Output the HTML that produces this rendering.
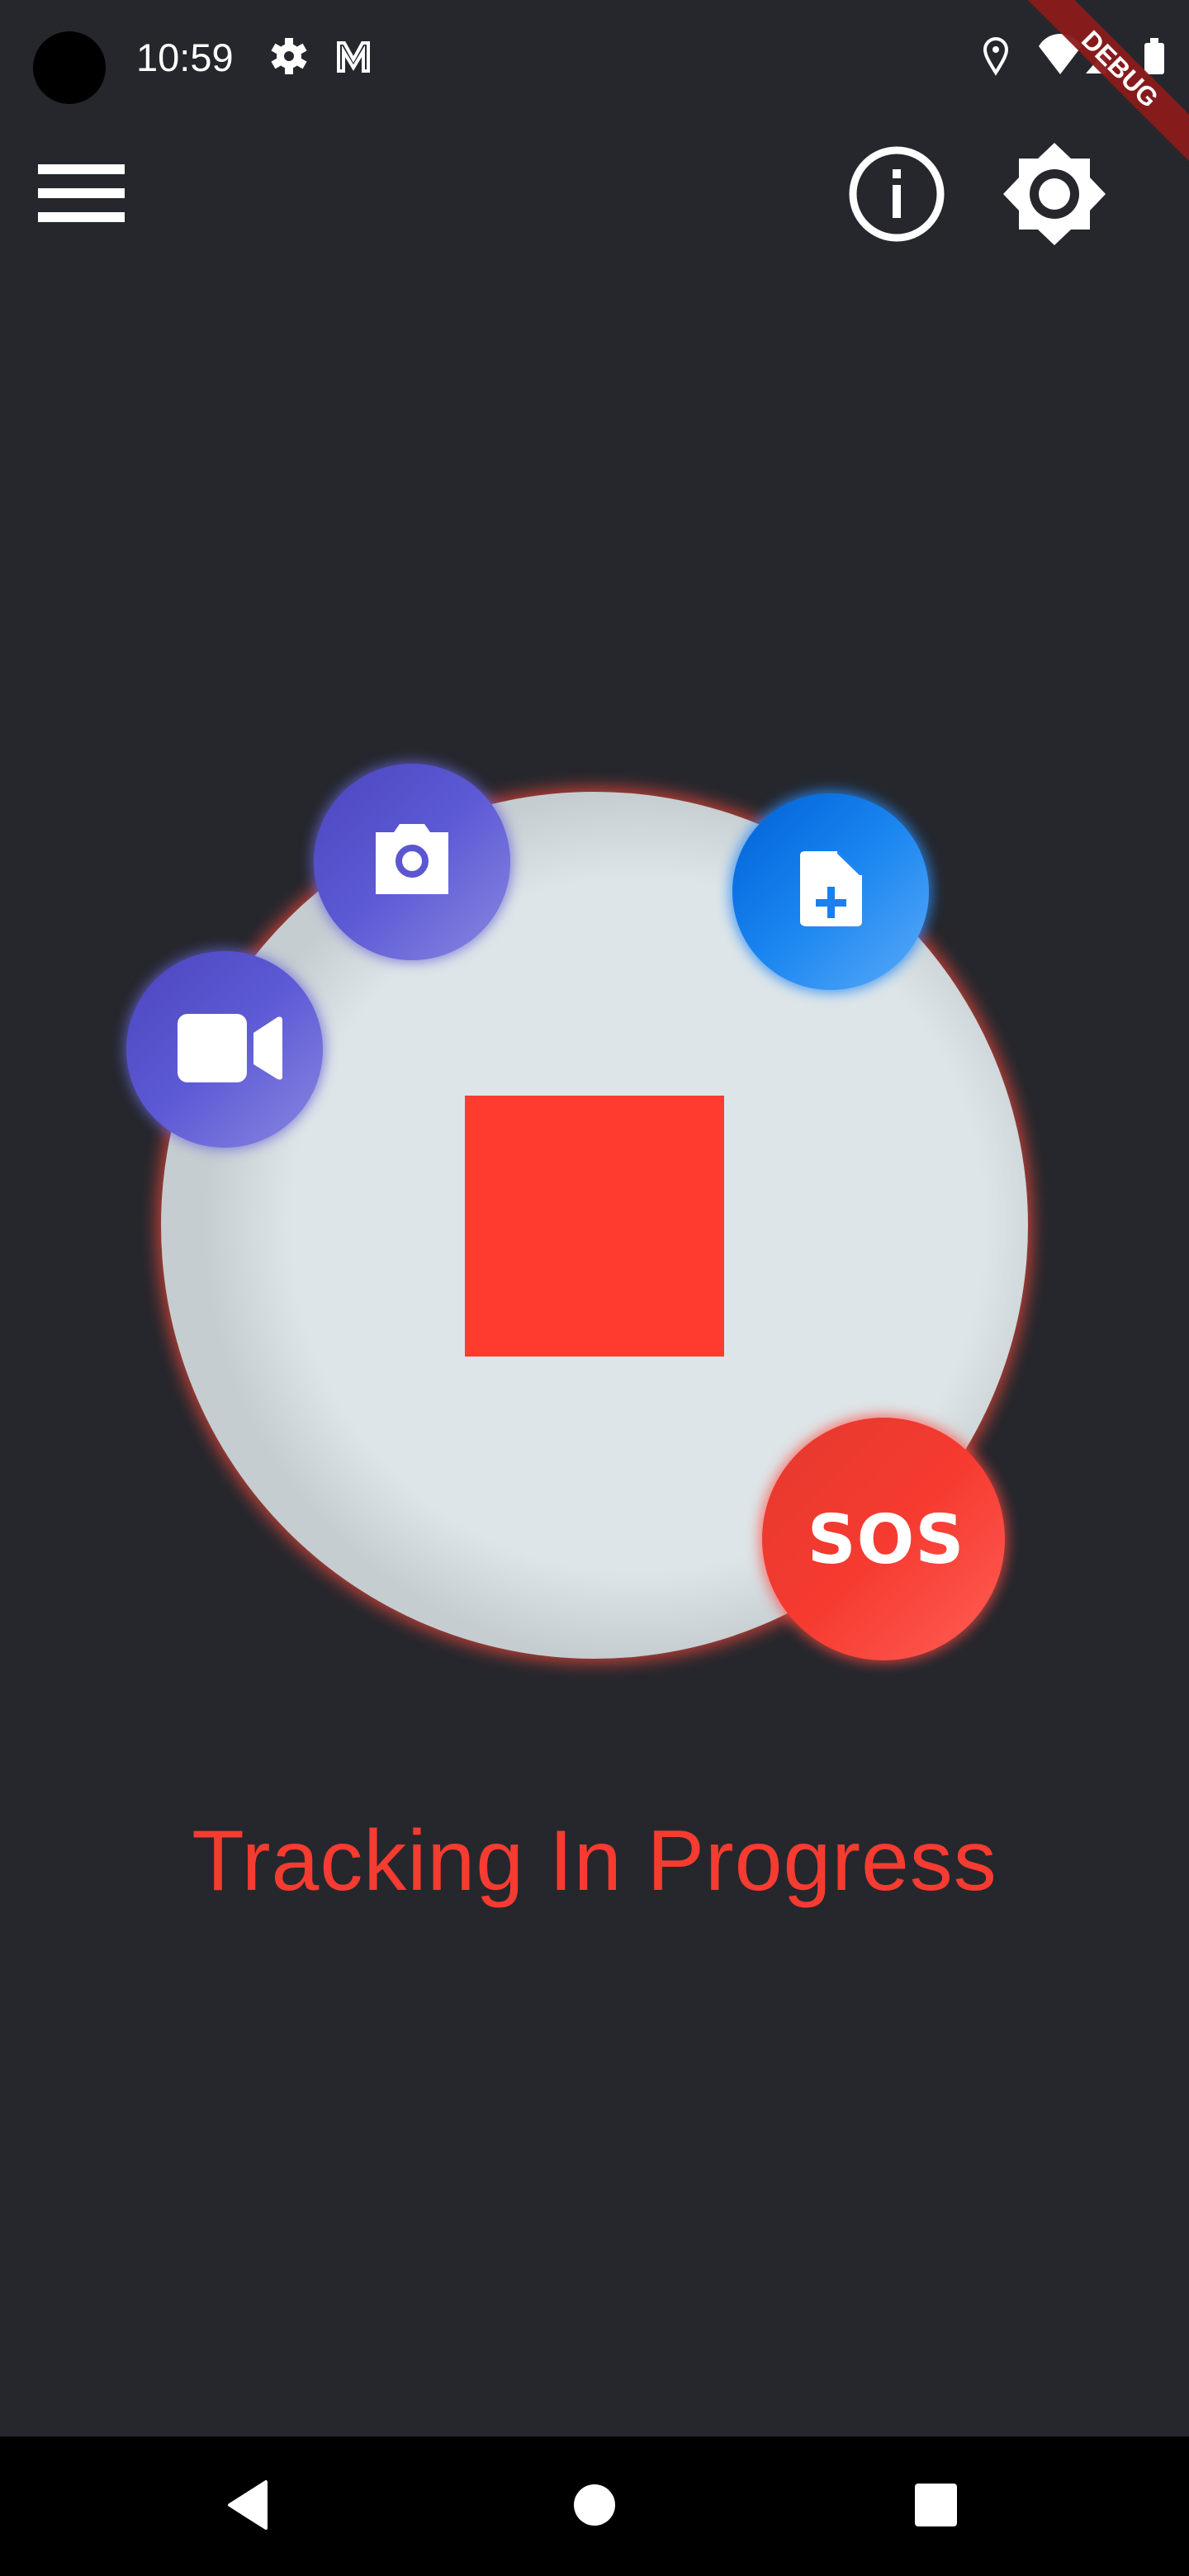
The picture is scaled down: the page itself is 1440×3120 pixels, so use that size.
<!DOCTYPE html>
<html><head><meta charset="utf-8"><style>
html,body{margin:0;padding:0;}
body{width:1440px;height:3120px;background:#25272d;position:relative;overflow:hidden;font-family:"Liberation Sans",sans-serif;}
.abs{position:absolute;}
</style></head><body>
<svg class="abs" style="left:0;top:0" width="1440" height="3120" viewBox="0 0 1440 3120">
<defs>
<filter id="glowR" x="-20%" y="-20%" width="140%" height="140%"><feGaussianBlur stdDeviation="10"/></filter>
<filter id="glowS" x="-30%" y="-30%" width="160%" height="160%"><feGaussianBlur stdDeviation="8"/></filter>
<radialGradient id="plate" cx="0.55" cy="0.5" r="0.5">
<stop offset="0.8" stop-color="#dde5e8"/><stop offset="1" stop-color="#c5cdd0"/></radialGradient>
<linearGradient id="purp" x1="0" y1="0" x2="1" y2="1"><stop offset="0" stop-color="#4b46bd"/><stop offset="0.5" stop-color="#5d5ad6"/><stop offset="1" stop-color="#8a88e0"/></linearGradient>
<linearGradient id="blue" x1="0" y1="0" x2="1" y2="1"><stop offset="0" stop-color="#0060d8"/><stop offset="0.5" stop-color="#1a86f0"/><stop offset="1" stop-color="#5aaaf8"/></linearGradient>
<linearGradient id="red" x1="0" y1="0" x2="1" y2="1"><stop offset="0" stop-color="#e33a2e"/><stop offset="0.5" stop-color="#f63a30"/><stop offset="1" stop-color="#ff5e55"/></linearGradient>
</defs>
<ellipse cx="84" cy="82" rx="44" ry="44" fill="#000"/>
<g transform="translate(350,68)" fill="#fff">
<circle r="15"/>
<g><rect x="-5" y="-22" width="10" height="44"/><rect x="-5" y="-22" width="10" height="44" transform="rotate(60)"/><rect x="-5" y="-22" width="10" height="44" transform="rotate(120)"/></g>
<circle r="6" fill="#25272d"/></g>
<path d="M410 86 V52 H417 L428 72 L439 52 H446 V86 H440 V62 L428 82 L416 62 V86 Z" fill="none" stroke="#fff" stroke-width="4"/>
<path d="M1206 88 C1196 72 1193 66 1193 60 A13 13 0 0 1 1219 60 C1219 66 1216 72 1206 88 Z" fill="none" stroke="#fff" stroke-width="4"/>
<circle cx="1206" cy="60" r="4" fill="#fff"/>
<path d="M1258 56 A30 30 0 0 1 1310 56 L1284 90 Z" fill="#fff"/>
<path d="M1315 89 L1340 60 V89 Z" fill="#fff"/>
<rect x="1386" y="52" width="24" height="38" rx="3" fill="#fff"/><rect x="1393" y="46" width="10" height="8" fill="#fff"/>
<g transform="translate(1440,0) rotate(45)">
<rect x="-200" y="98" width="400" height="40" fill="#8b1a1a" opacity="0.95"/>
<text x="0" y="129" fill="#fff" font-family="Liberation Sans" font-weight="bold" font-size="32" text-anchor="middle">DEBUG</text>
</g>
<rect x="46" y="199" width="105" height="12" fill="#fff"/>
<rect x="46" y="228" width="105" height="12" fill="#fff"/>
<rect x="46" y="257" width="105" height="12" fill="#fff"/>
<circle cx="1086" cy="235" r="53" fill="none" stroke="#fff" stroke-width="9"/>
<rect x="1081" y="205" width="10" height="11" fill="#fff"/>
<rect x="1081" y="224" width="10" height="40" fill="#fff"/>
<g transform="translate(1277,235)" fill="#fff">
<rect x="-43" y="-43" width="86" height="86"/>
<path d="M0 -62 L20 -43 H-20 Z M0 62 L20 43 H-20 Z M-62 0 L-43 20 V-20 Z M62 0 L43 20 V-20 Z"/>
<circle r="30" fill="#25272d"/><circle r="19" fill="#fff"/>
</g>
<circle cx="720" cy="1484" r="530" fill="#e8463a" filter="url(#glowR)" opacity="0.8"/>
<circle cx="720" cy="1484" r="525" fill="url(#plate)"/>
<rect x="563" y="1327" width="314" height="316" fill="#ff3b30"/>
<circle cx="499" cy="1044" r="121" fill="#6a66d8" filter="url(#glowS)" opacity="0.8"/>
<circle cx="499" cy="1044" r="119" fill="url(#purp)"/>
<path d="M455 1008 H477 L484 998 H514 L521 1008 H543 V1083 H455 Z" fill="#fff"/>
<circle cx="499" cy="1043" r="16" fill="none" stroke="#5b57d2" stroke-width="8"/>
<circle cx="272" cy="1271" r="121" fill="#6a66d8" filter="url(#glowS)" opacity="0.8"/>
<circle cx="272" cy="1271" r="119" fill="url(#purp)"/>
<rect x="215" y="1228" width="84" height="83" rx="12" fill="#fff"/>
<path d="M307 1251 L336 1232 Q342 1230 342 1236 V1304 Q342 1309 336 1307 L307 1289 Z" fill="#fff"/>
<circle cx="1006" cy="1080" r="122" fill="#2a8af5" filter="url(#glowS)" opacity="0.85"/>
<circle cx="1006" cy="1080" r="119" fill="url(#blue)"/>
<path d="M972 1031 H1014 L1044 1060 V1116 Q1044 1122 1038 1122 H978 Q969 1122 969 1116 V1036 Q969 1031 975 1031 Z" fill="#fff"/>
<path d="M1014 1031 V1060 H1044 Z" fill="#1a7ff0"/>
<path d="M1013 1033 L1041 1060 H1013 Z" fill="#fff"/>
<rect x="988" y="1089" width="37" height="9" fill="#1a7ff0"/>
<rect x="1002" y="1074" width="9" height="38" fill="#1a7ff0"/>
<circle cx="1070" cy="1864" r="150" fill="#ff4a40" filter="url(#glowS)" opacity="0.75"/>
<circle cx="1070" cy="1864" r="147" fill="url(#red)"/>
<text x="1073" y="1893" fill="#fff" font-family="DejaVu Sans" font-weight="bold" font-size="82" text-anchor="middle" letter-spacing="1">SOS</text>
<rect x="0" y="2951" width="1440" height="169" fill="#000"/>
<path d="M322 3006 V3062 L278 3034 Z" fill="#fff" stroke="#fff" stroke-width="4" stroke-linejoin="round"/>
<circle cx="720" cy="3034" r="25" fill="#fff"/>
<rect x="1108" y="3008" width="51" height="52" rx="4" fill="#fff"/>
</svg>
<div class="abs" style="left:165px;top:42px;color:#fff;font-size:47px;">10:59</div>
<div class="abs" style="left:0;width:1440px;top:2194px;text-align:center;color:#f63b30;font-size:104px;line-height:120px;letter-spacing:1px;">Tracking In Progress</div>
</body></html>
